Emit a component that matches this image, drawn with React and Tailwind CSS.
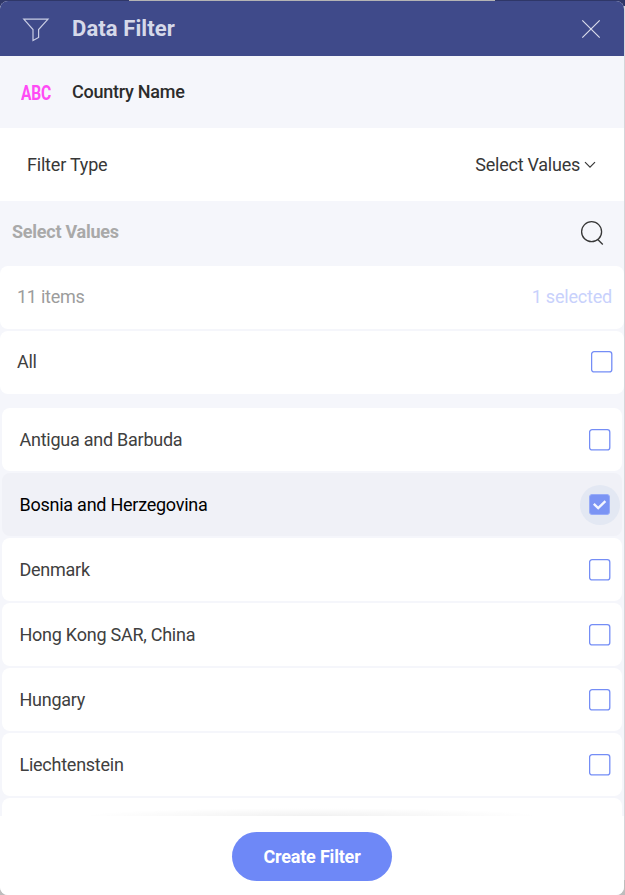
const countries = [
  'Antigua and Barbuda',
  'Bosnia and Herzegovina',
  'Denmark',
  'Hong Kong SAR, China',
  'Hungary',
  'Liechtenstein',
  '',
];

function Checkbox({ checked }) {
  if (checked) {
    return (
      <span className="-mr-[9px] flex h-10 w-10 items-center justify-center rounded-full bg-[#e3e8f3]">
        <span className="flex h-[21px] w-[21px] items-center justify-center rounded-[3px] border border-[#98acf8] bg-[#7b94f4]">
          <svg className="h-[19px] w-[19px]" viewBox="0 0 19 19" fill="none" stroke="#f4f6ff" strokeWidth="2.4">
            <path d="M3.8 8.8l4.4 4.2 7.2-6.8" />
          </svg>
        </span>
      </span>
    );
  }
  return (
    <svg className="h-[22px] w-[22px]" viewBox="0 0 22 22" fill="none" stroke="#748df6" strokeWidth="1.3">
      <rect x="0.6" y="0.7" width="20.2" height="20.2" rx="2.5" />
    </svg>
  );
}

function Row({ label, checked }) {
  return (
    <div
      className={`flex h-[63px] shrink-0 items-center justify-between rounded-lg pl-[17.5px] ${
        checked ? 'bg-[#f0f1f7] pr-[11.5px] text-black' : 'bg-white pr-[11.5px] text-[#404040]'
      }`}
    >
      <span>{label}</span>
      {label && <Checkbox checked={checked} />}
    </div>
  );
}

export default function App() {
  return (
    <div className="flex h-[895px] w-[625px] flex-col overflow-hidden bg-[linear-gradient(to_bottom,#2f3768_6px,#d5d6da_6px,#d5d6da_880px,#bdbdbd_880px)] font-['Roboto',sans-serif] text-[18px] leading-6 tracking-[-0.25px] text-[#373737]">
      <div className="flex h-px shrink-0 bg-[#2f3768] pl-[129px]">
        <div className="w-[366px] bg-[#b4b4b4]" />
      </div>
      <div className="flex min-h-0 w-[624px] flex-1 flex-col overflow-hidden rounded-lg bg-[#f5f6fb]">
        <header className="flex h-[55px] shrink-0 items-center bg-[#3f4a8a] pr-[23px] pl-[22px] text-[#d6d9e9]">
          <svg className="h-7 w-7" viewBox="0 0 28 28" fill="none" stroke="#c9cde4" strokeWidth="1.2">
            <path d="M1.8 4.1h24.2L16.6 14.5v8L11 25.6V14.5z" />
          </svg>
          <h1 className="ml-[22px] text-[22px] leading-7 font-bold tracking-[0.1px]">Data Filter</h1>
          <svg className="ml-auto h-5 w-5" viewBox="0 0 20 20" fill="none" stroke="#d8dbeb" strokeWidth="1.2">
            <path d="M1.3 1.3l17.4 17.4M18.7 1.3L1.3 18.7" />
          </svg>
        </header>

        <div className="flex h-[72px] shrink-0 items-center pl-[21px]">
          <span className="w-[51px] pt-0.5">
            <span className="inline-block origin-left scale-x-[.76] text-[20.5px] font-bold text-[#ff4bf5]">ABC</span>
          </span>
          <span className="font-medium text-[#2c2c2c]">Country Name</span>
        </div>

        <div className="flex h-[73px] shrink-0 items-center justify-between bg-white pr-7 pl-[27px]">
          <span className="tracking-[-0.2px]">Filter Type</span>
          <span className="flex items-center gap-1">
            Select Values
            <svg className="h-3 w-3" viewBox="0 0 12 12" fill="none" stroke="#373737" strokeWidth="1.2">
              <path d="M1 3.2l5 5 5-5" />
            </svg>
          </span>
        </div>

        <div className="flex h-[65px] shrink-0 items-center justify-between pr-5 pb-[3px] pl-3">
          <span className="font-bold text-[#a9a9a9]">Select Values</span>
          <svg className="h-6 w-6 overflow-visible" viewBox="0 0 24 24" fill="none" stroke="#373737" strokeWidth="1.3">
            <circle cx="11.6" cy="11.7" r="10" />
            <path d="M17.8 19.5l5 5" />
          </svg>
        </div>

        <div className="flex h-[63px] shrink-0 items-center justify-between rounded-lg bg-white pr-3 pb-[2px] pl-[17px] text-[#9c9c9c]">
          <span>11 items</span>
          <span className="tracking-[-0.2px] text-[#c8d1fc]">1 selected</span>
        </div>
        <div className="mt-0.5 flex h-[63px] shrink-0 items-center justify-between rounded-lg bg-white pr-[11px] pb-px pl-[17px] text-[#404040]">
          <span className="-mt-px">All</span>
          <Checkbox />
        </div>

        <div className="mt-3.5 flex min-h-0 flex-1 flex-col gap-0.5 overflow-hidden px-0.5">
          {countries.map((name, i) => (
            <Row key={i} label={name} checked={i === 1} />
          ))}
        </div>

        <footer className="relative flex h-[79px] shrink-0 justify-center bg-white pt-4">
          <div className="absolute inset-x-20 -top-2 h-2 bg-[radial-gradient(ellipse_at_bottom,rgba(0,0,0,0.055),transparent_70%)]" />
          <button className="h-[49px] w-[160px] rounded-full bg-[#6e88f7] font-bold tracking-[-0.2px] text-white">Create Filter</button>
        </footer>
      </div>
    </div>
  );
}
